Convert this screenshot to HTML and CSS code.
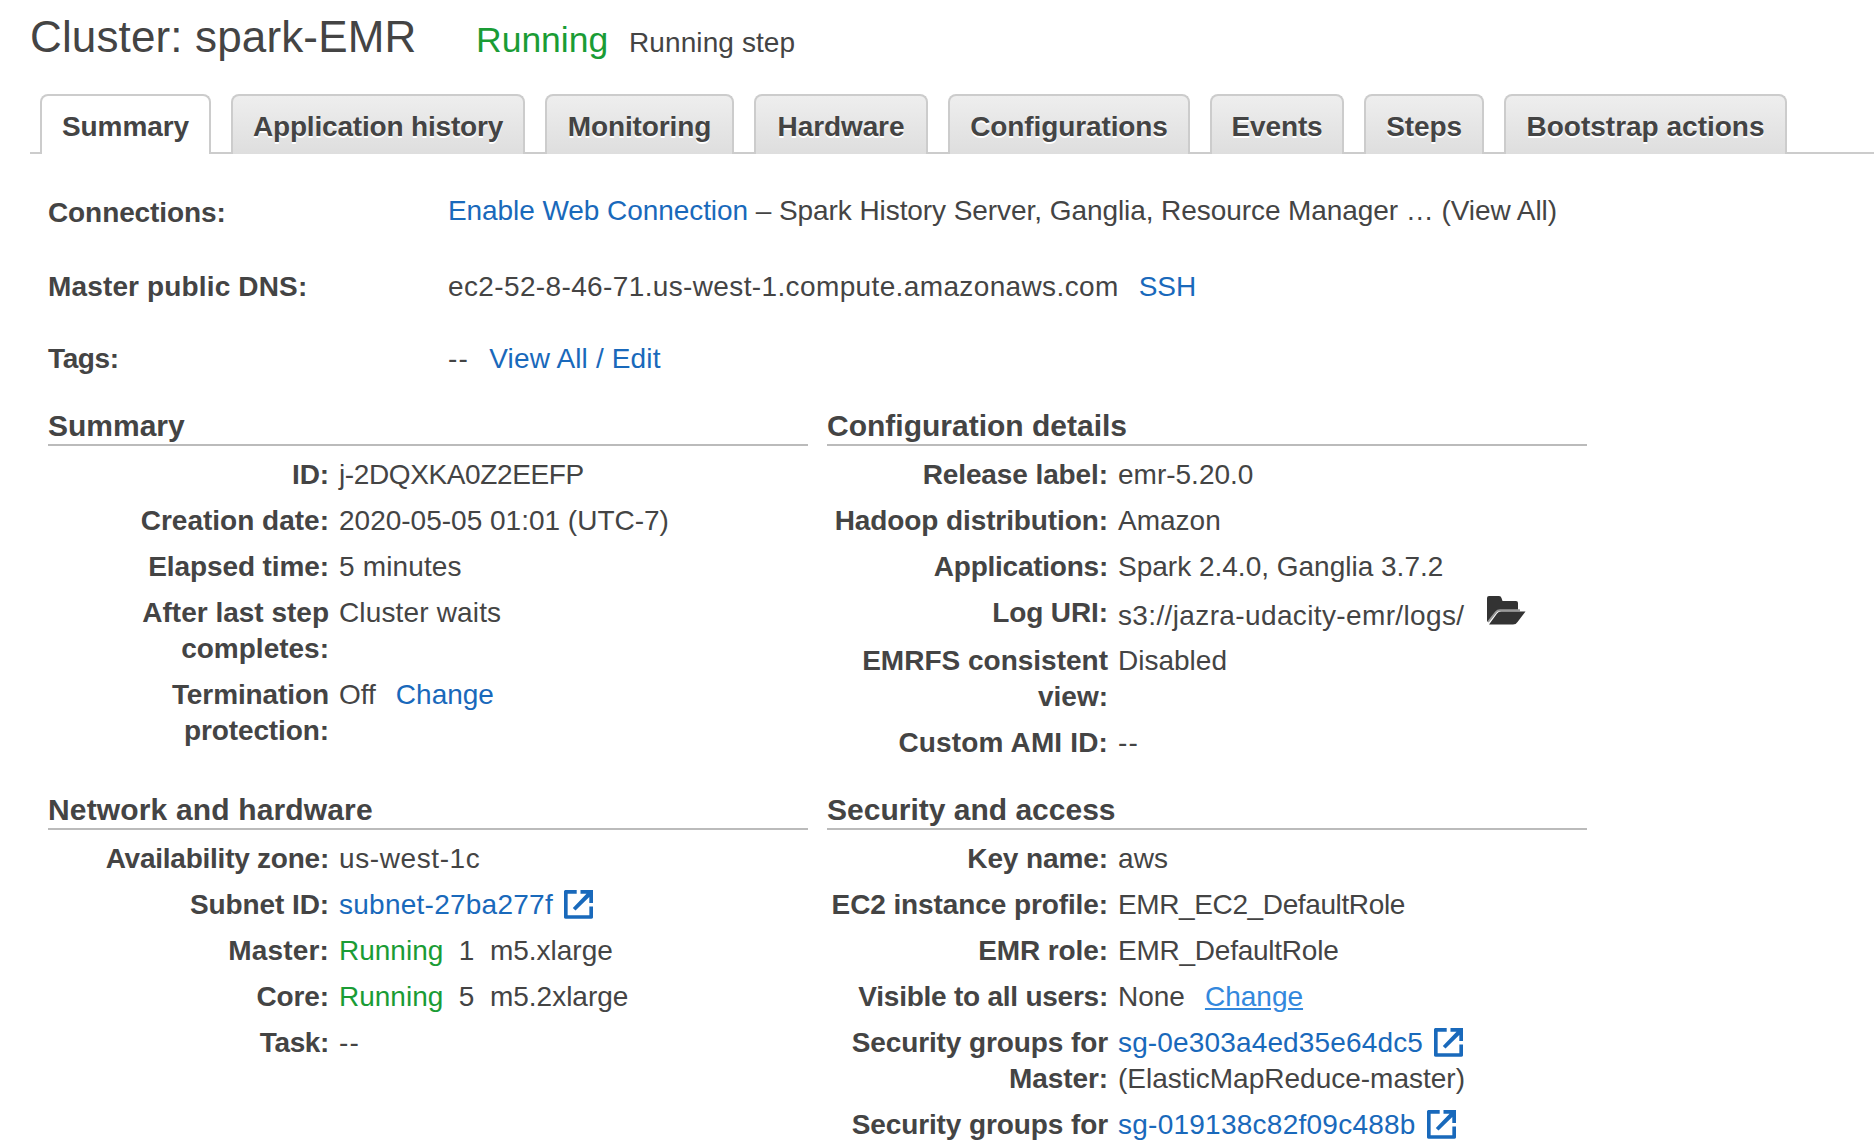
FILE: index.html
```html
<!DOCTYPE html>
<html lang="en">
<head>
<meta charset="utf-8">
<title>Cluster: spark-EMR</title>
<link rel="stylesheet" href="styles.css">
</head>
<body>
<svg class="sprite" aria-hidden="true">
  <symbol id="external" viewBox="0 0 29 29">
    <path d="M12.700 1.800H1.800V27H27.200V16.500" fill="none" stroke="currentColor" stroke-width="3.700" stroke-linejoin="round"/>
    <path d="M16.500 0H29V13H25.300V7L11.500 20.500L8.800 18L22.500 3.700H16.500Z" fill="currentColor"/>
  </symbol>
  <symbol id="folder" viewBox="0 0 40 30">
    <path d="M1 26V3Q1 1 3 1H13Q15 1 15.500 3L16.500 6H30Q32 6 32 8V15H14Q11 15 9.500 17.500L2 27Z" fill="#333"/>
    <path d="M2 27L10 17Q11.500 15.200 14 15.200H34" fill="none" stroke="#999" stroke-width="2"/>
    <path d="M3 29.500L11 18.500Q12.500 16.500 15 16.500H39.500L31.500 27Q30 29.500 27 29.500Z" fill="#333"/>
  </symbol>
</svg>
<header class="title">
  <h1>Cluster: spark-EMR</h1>
  <span class="state">Running</span>
  <span class="detail">Running step</span>
</header>
<nav class="tabs">
  <a class="tab active">Summary</a>
  <a class="tab">Application history</a>
  <a class="tab">Monitoring</a>
  <a class="tab">Hardware</a>
  <a class="tab">Configurations</a>
  <a class="tab">Events</a>
  <a class="tab">Steps</a>
  <a class="tab">Bootstrap actions</a>
</nav>
<main>
  <dl class="overview">
    <dt>Connections:</dt>
    <dd class="connections"><a>Enable Web Connection</a> – Spark History Server, Ganglia, Resource Manager … (View All)</dd>
    <dt class="wide">Master public DNS:</dt>
    <dd><span class="wider">ec2-52-8-46-71.us-west-1.compute.amazonaws.com</span><a class="gap">SSH</a></dd>
    <dt class="tighter">Tags:</dt>
    <dd><span class="none">--</span><a class="gap wide">View All / Edit</a></dd>
  </dl>
  <div class="panels">
    <section>
      <h2>Summary</h2>
      <dl class="facts">
        <dt>ID:</dt><dd class="tighter">j-2DQXKA0Z2EEFP</dd>
        <dt class="normal">Creation date:</dt><dd>2020-05-05 01:01 (UTC-7)</dd>
        <dt>Elapsed time:</dt><dd class="wide">5 minutes</dd>
        <dt class="normal">After last step completes:</dt><dd class="wide">Cluster waits</dd>
        <dt>Termination protection:</dt><dd>Off<a class="gap">Change</a></dd>
      </dl>
    </section>
    <section>
      <h2>Configuration details</h2>
      <dl class="facts">
        <dt>Release label:</dt><dd>emr-5.20.0</dd>
        <dt>Hadoop distribution:</dt><dd>Amazon</dd>
        <dt class="tight">Applications:</dt><dd>Spark 2.4.0, Ganglia 3.7.2</dd>
        <dt>Log URI:</dt><dd class="log"><span class="wider">s3://jazra-udacity-emr/logs/</span><svg class="folder"><use href="#folder"/></svg></dd>
        <dt class="normal">EMRFS consistent view:</dt><dd>Disabled</dd>
        <dt class="wide">Custom AMI ID:</dt><dd class="none">--</dd>
      </dl>
    </section>
    <section>
      <h2 class="wide">Network and hardware</h2>
      <dl class="facts">
        <dt class="tight">Availability zone:</dt><dd class="widest">us-west-1c</dd>
        <dt>Subnet ID:</dt><dd><a class="loose">subnet-27ba277f</a><svg class="external"><use href="#external"/></svg></dd>
        <dt class="wide">Master:</dt><dd><span class="up">Running</span><span class="count">1</span>m5.xlarge</dd>
        <dt>Core:</dt><dd><span class="up">Running</span><span class="count">5</span>m5.2xlarge</dd>
        <dt class="tighter">Task:</dt><dd class="none">--</dd>
      </dl>
    </section>
    <section>
      <h2>Security and access</h2>
      <dl class="facts">
        <dt>Key name:</dt><dd class="wide">aws</dd>
        <dt>EC2 instance profile:</dt><dd class="tighter">EMR_EC2_DefaultRole</dd>
        <dt>EMR role:</dt><dd class="tight">EMR_DefaultRole</dd>
        <dt class="tight">Visible to all users:</dt><dd>None<a class="gap hover">Change</a></dd>
        <dt>Security groups for Master:</dt><dd><a class="wide">sg-0e303a4ed35e64dc5</a><svg class="external"><use href="#external"/></svg><br>(ElasticMapReduce-master)</dd>
        <dt>Security groups for</dt><dd><a class="loose">sg-019138c82f09c488b</a><svg class="external"><use href="#external"/></svg></dd>
      </dl>
    </section>
  </div>
</main>
</body>
</html>
```
FILE: styles.css
```css
* { box-sizing: border-box; }
body {
  margin: 0;
  height: 1148px;
  overflow: hidden;
  background: #fff;
  color: #444;
  font: 28px/36px "Liberation Sans", Arial, sans-serif;
}
.sprite { display: none; }
h1, h2, dl, dt, dd { margin: 0; }
a { color: #1969bb; }

.title {
  display: flex;
  align-items: baseline;
  height: 94px;
  padding: 12px 0 0 30px;
}
h1 { font-size: 44px; line-height: 50px; font-weight: 400; width: 446px; letter-spacing: 0.14px; }
.state { color: #1a9c35; font-size: 35.5px; width: 153px; }
.detail { letter-spacing: 0.1px; }

.tabs {
  display: flex;
  gap: 20px;
  height: 60px;
  margin-left: 30px;
  padding-left: 10px;
  border-bottom: 2px solid #ccc;
}
.tab {
  flex: none;
  height: 60px;
  border: 2px solid #ccc;
  border-bottom: 0;
  border-radius: 8px 8px 0 0;
  background: linear-gradient(#eee, #dedede);
  color: #444;
  font-weight: 700;
  line-height: 62px;
  letter-spacing: -0.1px;
  text-align: center;
  text-shadow: 0 2px 0 #fff;
  white-space: nowrap;
}
.tab.active { background: #fff; }
.tab:nth-child(1) { width: 171px; }
.tab:nth-child(2) { width: 294px; letter-spacing: -0.18px; }
.tab:nth-child(3) { width: 189px; }
.tab:nth-child(4) { width: 174px; }
.tab:nth-child(5) { width: 242px; }
.tab:nth-child(6) { width: 134px; }
.tab:nth-child(7) { width: 120px; }
.tab:nth-child(8) { width: 283px; letter-spacing: 0; }

main { padding: 41px 0 0 48px; }
.overview {
  display: grid;
  grid-template-columns: 400px auto;
  grid-template-rows: 74px 72px 67px;
}
.connections { margin-top: -2px; letter-spacing: -0.07px; }
dt { font-weight: 700; letter-spacing: -0.1px; }
dd { white-space: nowrap; }
.gap { margin-left: 20px; }

.panels {
  display: grid;
  grid-template-columns: 760px 760px;
  grid-template-rows: 384px auto;
  column-gap: 19px;
}
h2 {
  font-size: 30px;
  line-height: 36px;
  height: 38px;
  border-bottom: 2px solid #bbb;
}
.facts {
  display: grid;
  grid-template-columns: 281px auto;
  gap: 10px 10px;
  padding-top: 11px;
}
.facts dt { text-align: right; }
.up { color: #1a9c35; }
.count { margin: 0 15.5px; }

/* letter tracking */
.tighter { letter-spacing: -0.38px; }
.tight { letter-spacing: -0.24px; }
.normal { letter-spacing: 0; }
.wide { letter-spacing: 0.15px; }
.loose { letter-spacing: 0.25px; }
.wider { letter-spacing: 0.37px; }
.widest { letter-spacing: 0.6px; }
.none { letter-spacing: 1.3px; }

.external { width: 29px; height: 29px; margin-left: 11px; vertical-align: -5px; color: #1969bb; }
.log { height: 38px; line-height: 40px; }
.folder { width: 40px; height: 30px; margin-left: 22px; }
.hover { color: #3388dd; text-decoration: underline; }
```
